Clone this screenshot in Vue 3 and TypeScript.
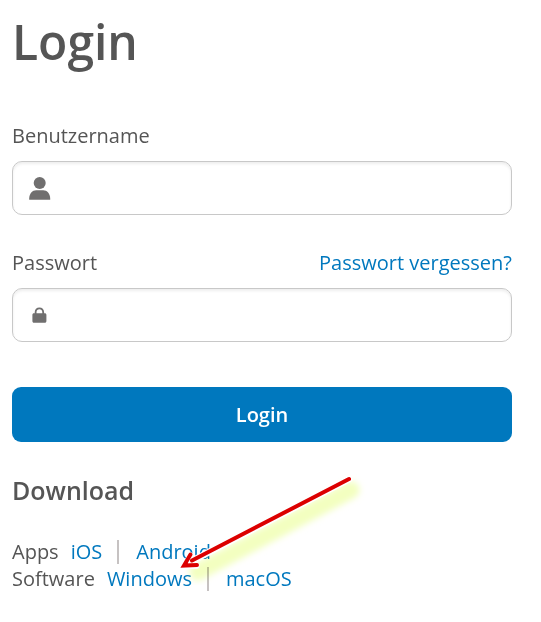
<script setup lang="ts">
import { ref } from 'vue'

interface DownloadLink {
  name: string
  href: string
}

interface DownloadGroup {
  label: string
  links: DownloadLink[]
}

const username = ref<string>('')
const password = ref<string>('')

const downloads: DownloadGroup[] = [
  {
    label: 'Apps',
    links: [
      { name: 'iOS', href: '#ios' },
      { name: 'Android', href: '#android' },
    ],
  },
  {
    label: 'Software',
    links: [
      { name: 'Windows', href: '#windows' },
      { name: 'macOS', href: '#macos' },
    ],
  },
]
</script>

<template>
  <main class="page">
    <h1 class="title">Login</h1>

    <form class="form" @submit.prevent>
      <div class="field">
        <div class="field-head">
          <label for="username">Benutzername</label>
        </div>
        <div class="control">
          <svg class="icon" viewBox="0 0 24 24" aria-hidden="true">
            <circle cx="11.7" cy="7" r="6" />
            <path d="M1.2 23.8V22.6C1.2 17.6 4.4 14.3 8.2 14.3H15.2C19 14.3 22.2 17.6 22.2 22.6V23.8Z" />
          </svg>
          <input id="username" v-model="username" type="text" autocomplete="username" />
        </div>
      </div>

      <div class="field">
        <div class="field-head">
          <label for="password">Passwort</label>
          <a href="#reset">Passwort vergessen?</a>
        </div>
        <div class="control">
          <svg class="icon" viewBox="0 0 24 24" aria-hidden="true">
            <path
              fill-rule="evenodd"
              d="M6.7 10.2V9.2C6.7 6.3 8.6 4.4 11.4 4.4S16.1 6.3 16.1 9.2V10.2H16.7C17.8 10.2 18.4 10.8 18.4 11.9V18C18.4 19.2 17.8 19.8 16.7 19.8H6.1C4.9 19.8 4.4 19.2 4.4 18V11.9C4.4 10.8 4.9 10.2 6.1 10.2ZM8.5 10.2H14.3V9.2C14.3 7.3 13.1 6.2 11.4 6.2S8.5 7.3 8.5 9.2Z"
            />
          </svg>
          <input id="password" v-model="password" type="password" autocomplete="current-password" />
        </div>
      </div>

      <button class="submit" type="submit">Login</button>
    </form>

    <section class="downloads">
      <h2 class="subtitle">Download</h2>
      <div v-for="group in downloads" :key="group.label" class="group">
        <span>{{ group.label }}</span>
        <ul class="links">
          <li v-for="link in group.links" :key="link.name">
            <a :href="link.href">{{ link.name }}</a>
          </li>
        </ul>
      </div>

      <!-- Arrow pointing at the Windows download -->
      <svg class="arrow" viewBox="0 0 200 120" aria-hidden="true">
        <defs>
          <filter id="glow" x="-20%" y="-20%" width="140%" height="140%">
            <feGaussianBlur stdDeviation="3" />
          </filter>
        </defs>
        <path class="arrow-glow" filter="url(#glow)" d="M175 25L22 107" />
        <path class="arrow-halo" d="M173 14L14 97" />
        <path class="arrow-halo" d="M15 91L9 100.5H20" />
        <path class="arrow-line" d="M173 14L16 95.5" />
        <path class="arrow-head" d="M14.5 89.5L8 100.5L21 100" />
      </svg>
    </section>
  </main>
</template>

<style>
body {
  margin: 0;
  background: #fff;
}
</style>

<style scoped>
.page {
  box-sizing: border-box;
  max-width: 720px;
  padding: 12px 29px 30px 12px;
  color: #555;
  font-family: 'Open Sans', 'Noto Sans', sans-serif;
  font-size: 20px;
  line-height: 27px;
}

.title {
  margin: 0 0 50px;
  font-size: 48px;
  font-weight: 600;
  line-height: 60px;
}

.form {
  display: flex;
  flex-direction: column;
}

.field {
  display: flex;
  flex-direction: column;
  gap: 12px;
  margin-bottom: 34px;
}

.field-head {
  display: flex;
  justify-content: space-between;
}

a {
  color: #0078be;
  text-decoration: none;
}

.control {
  box-sizing: border-box;
  display: flex;
  align-items: center;
  gap: 10px;
  height: 54px;
  padding: 0 15px;
  border: 1px solid #c8c8c8;
  border-radius: 10px;
  background: #fff;
  box-shadow: inset 0 2px 3px rgba(0, 0, 0, 0.07);
}

.control:focus-within {
  border-color: #0078be;
}

.icon {
  flex: none;
  width: 24px;
  height: 24px;
  fill: #706f6f;
}

.control input {
  flex: 1;
  min-width: 0;
  padding: 0;
  border: 0;
  outline: 0;
  background: transparent;
  color: inherit;
  font: inherit;
}

.submit {
  height: 55px;
  margin-top: 11px;
  border: 0;
  border-radius: 9px;
  background: #0078be;
  color: #fff;
  font: inherit;
  font-weight: 600;
  cursor: pointer;
}

.downloads {
  position: relative;
  margin-top: 31px;
}

.subtitle {
  margin: 0 0 31px;
  font-size: 25px;
  font-weight: 600;
  line-height: 34px;
}

.group {
  display: flex;
  gap: 12px;
}

.links {
  display: flex;
  margin: 0;
  padding: 0;
  list-style: none;
}

.links li {
  display: flex;
  align-items: center;
}

.links li + li::before {
  content: '';
  width: 2px;
  height: 24px;
  margin: 0 17px 0 15px;
  background: #c6c2c2;
}

.arrow {
  position: absolute;
  top: -8px;
  left: 164px;
  width: 200px;
  height: 120px;
  fill: none;
  stroke-linecap: round;
  pointer-events: none;
}

.arrow-glow {
  stroke: #f3ffc0;
  stroke-width: 17px;
  mix-blend-mode: multiply;
}

.arrow-halo {
  stroke: #fff;
  stroke-width: 7px;
}

.arrow-line,
.arrow-head {
  stroke: #dc0000;
  stroke-width: 4px;
}

.arrow-head {
  stroke-linejoin: miter;
}
</style>
